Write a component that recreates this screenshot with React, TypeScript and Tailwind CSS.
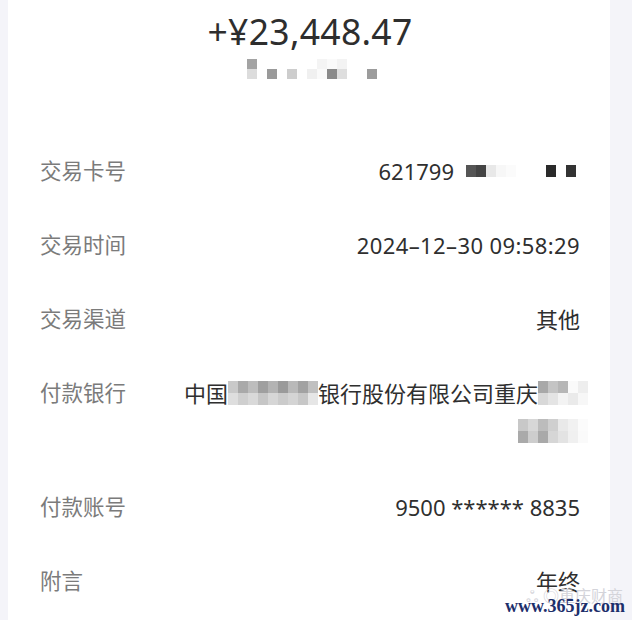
import React from "react";

const font = {
  fontFamily: '"Noto Sans", "Noto Sans CJK SC", sans-serif',
};

// blurred mosaic blocks, each row is a list of cell colours
const Mosaic = ({ rows, cell = 10, h = 10 }: { rows: string[][]; cell?: number; h?: number }) => (
  <div className="flex flex-col">
    {rows.map((r, i) => (
      <div key={i} className="flex">
        {r.map((c, j) => (
          <div key={j} style={{ width: cell, height: h, background: c }} />
        ))}
      </div>
    ))}
  </div>
);

const amountBlur = [
  ["#a3a3a3", "#fff", "#fff", "#fff", "#fff", "#fff", "#fff", "#f4f4f4", "#fafafa", "#f3f3f3", "#fff", "#fff", "#fff"],
  ["#dcdcdc", "#fff", "#9a9a9a", "#fff", "#cdcdcd", "#fff", "#f0f0f0", "#fafafa", "#8a8a8a", "#dedede", "#fff", "#fff", "#9c9c9c"],
];

const cardBlur = [
  ["#555", "#444", "#e8e8e8", "#f7f7f7", "#fbfbfb", "#fff", "#fff", "#fff", "#2a2a2a", "#fff", "#333", "#f2f2f2"],
];

const bankBlur1 = [
  ["#c9c9c9", "#a9a9a9", "#bdbdbd", "#9f9f9f", "#b3b3b3", "#9a9a9a", "#b9b9b9", "#a2a2a2", "#c0c0c0"],
  ["#dedede", "#cfcfcf", "#d9d9d9", "#c6c6c6", "#d6d6d6", "#cbcbcb", "#d4d4d4", "#c7c7c7", "#e6e6e6"],
];

const bankBlur2 = [
  ["#a8a8a8", "#c4c4c4", "#b6b6b6", "#fafafa", "#eeeeee"],
  ["#d8d8d8", "#e4e4e4", "#f3f3f3", "#eaeaea", "#f7f7f7"],
];

const bankBlur3 = [
  ["#c8c8c8", "#d7d7d7", "#bcbcbc", "#cfcfcf", "#e9e9e9", "#f1f1f1", "#fbfbfb"],
  ["#aaaaaa", "#cdcdcd", "#a9a9a9", "#d6d6d6", "#e3e3e3", "#f0f0f0", "#fafafa"],
];

const Row = ({ label, children, className = "" }: { label: string; children: React.ReactNode; className?: string }) => (
  <div className={`flex justify-between items-start py-[18px] ${className}`}>
    <span className="text-[21.5px] leading-[38px] text-[#7b7b7b] shrink-0">{label}</span>
    <div className="text-[22px] leading-[38px] text-[#2f2f2f] text-right">{children}</div>
  </div>
);

export default function App() {
  return (
    <div className="relative w-[632px] h-[620px] bg-[#f4f4f9] overflow-hidden" style={font}>
      <div className="ml-[8px] w-[602px] h-full bg-white pl-[32px] pr-[30px]">
        <div className="flex flex-col items-center pt-[8px]">
          <div className="text-[35.5px] leading-[46px] text-[#2e2e2e] tracking-[0.3px]">+¥23,448.47</div>
          <div className="mt-[5px] ml-[4px]">
            <Mosaic rows={amountBlur} />
          </div>
        </div>

        <div className="mt-[55px]">
          <Row label="交易卡号">
            <div className="flex items-center gap-[12px] mr-[4px]">
              <span>621799</span>
              <Mosaic rows={cardBlur.map((r) => r.slice(0, 11))} cell={10} h={12} />
            </div>
          </Row>
          <Row label="交易时间">
            <span className="tracking-[0.4px]">2024–12–30 09:58:29</span>
          </Row>
          <Row label="交易渠道">其他</Row>
          <Row label="付款银行" className="pb-[20px]">
            <div className="flex flex-col items-end mr-[-8px]">
              <div className="flex items-center">
                <span>中国</span>
                <Mosaic rows={bankBlur1} cell={10} h={12} />
                <span>银行股份有限公司重庆</span>
                <Mosaic rows={bankBlur2} cell={10} h={12} />
              </div>
              <div className="h-[38px] flex items-center">
                <Mosaic rows={bankBlur3} cell={10} h={12} />
              </div>
            </div>
          </Row>
          <Row label="付款账号">9500 ****** 8835</Row>
          <Row label="附言">年终</Row>
        </div>
      </div>

      {/* watermark */}
      <div className="absolute right-[7px] bottom-[5px] flex flex-col items-end leading-none">
        <span className="text-[16px] text-[#d4d4da] mr-[2px]">ஃ ◎重庆财商</span>
        <span
          className="text-[18px] text-[#1d2f6b] font-bold mt-[-7px]"
          style={{ fontFamily: '"Liberation Serif", serif' }}
        >
          www.365jz.com
        </span>
      </div>
    </div>
  );
}
